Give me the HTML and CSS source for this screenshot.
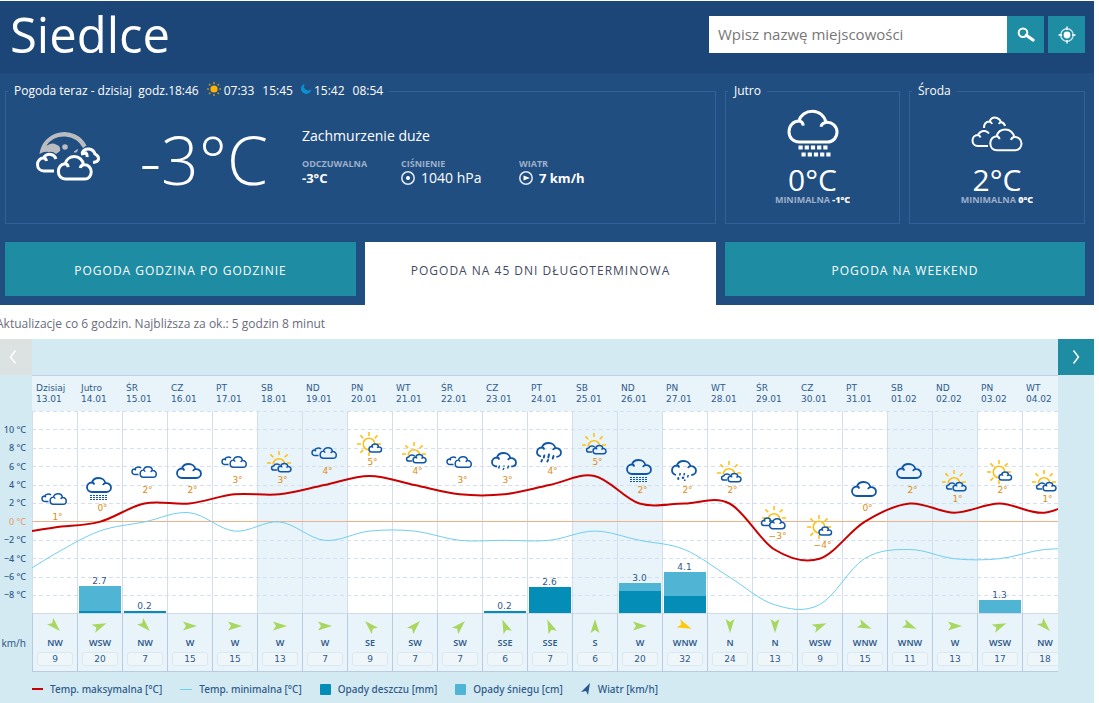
FILE: index.html
```html
<!DOCTYPE html>
<html lang="pl">
<head>
<meta charset="utf-8">
<title>Pogoda Siedlce</title>
<link rel="stylesheet" href="styles.css">
</head>
<body>
<svg class="defs" aria-hidden="true">
  <defs>
    <g id="cloud">
      <path class="cloud-body" d="M6 15C3 15 1 13 1 10.3C1 7.6 3.1 5.6 5.9 5.5C6.7 2.8 9.4 1 12.7 1C16.1 1 18.9 3.2 19.4 6.1C22.7 5.8 25 8 25 10.5C25 13 23 15 20.3 15Z"/>
      <path class="cloud-hook" d="M5.9 5.5C7.2 5.6 8 6.3 8.1 7.6M19.4 6.1C18 6.3 17.2 7 17 8.1"/>
    </g>
    <g id="i-clouds">
      <path class="cloud-open" d="M7.5 16.500H4C2.200 16.500 1 15.300 1 13.700C1 12.200 2.200 11.200 3.600 11.100C4.300 9.700 5.700 9 7.300 9C8.400 9 9.300 9.300 10 10M3.600 11.100L5 12"/>
      <use href="#cloud" transform="translate(8.5 8) scale(.67 .75)"/>
    </g>
    <g id="i-cloud" class="bold"><use href="#cloud" transform="translate(0 5)"/></g>
    <g id="i-snow" class="bold">
      <use href="#cloud" transform="translate(0 1)"/>
      <path class="dots" stroke-dasharray="2 1" d="M4 19.5H22M4 21.5H22M4 23.5H22"/>
    </g>
    <g id="i-drizzle" class="bold">
      <path class="cloud-open" d="M6 18.5C3 18.5 1 17 1 14.3C1 11.6 3.1 9.6 5.9 9.5C6.7 6.8 9.4 5 12.7 5C16.1 5 18.9 7.2 19.4 10.1C22.7 9.8 25 12 25 14.5C25 17 23 18.5 20.3 18.5M5.9 9.5C7.2 9.6 8 10.3 8.1 11.6M19.4 10.1C18 10.3 17.2 11 17 12.1"/>
      <path class="drop" d="M8.6 17.5L7.6 20.5M13 17.5V18.6M13 20L12 22M17.6 17.5L16.6 20.5"/>
    </g>
    <g id="i-rain" class="bold">
      <path class="cloud-open" d="M5 17.5C3 17 1 16 1 13.3C1 10.6 3.1 8.6 5.9 8.5C6.7 5.8 9.4 4 12.7 4C16.1 4 18.9 6.2 19.4 9.1C22.7 8.8 25 11 25 13.5C25 16 23 17.8 20.3 17.8M5.9 8.5C7.2 8.6 8 9.3 8.1 10.6M19.4 9.1C18 9.3 17.2 10 17 11.1"/>
      <path class="drop wide" d="M8.3 16.5L7.8 18.5M13 15.5L12.3 18.5M17.5 17L16.8 19.5M6 21L5.4 22.5M12 21L11.4 22.5"/>
    </g>
    <g id="i-sleet" class="bold">
      <path class="cloud-open" d="M5 17C3 16.5 1 15 1 12.3C1 9.6 3.1 7.6 5.9 7.5C6.7 4.8 9.4 3 12.7 3C16.1 3 18.9 5.2 19.4 8.1C22.7 7.8 25 10 25 12.5C25 15 23 17 20.3 17M5.9 7.5C7.2 7.6 8 8.3 8.1 9.6M19.4 8.1C18 8.3 17.2 9 17 10.1"/>
      <path class="drop" d="M9.3 15L8.6 17.5M13.5 15L13 17.3M17.3 17L16.5 19.5M6.5 19.5L8 21.5M8 19.5L6.5 21.5M12 18.5V21M10.8 19.8H13.2M14 21.5L13.5 23"/>
    </g>
    <g id="sun">
      <circle class="sun-disc" r="5.8"/>
      <path class="ray" d="M0 -8V-12M0 8V12M-8 0H-12M8 0H12M-5.7 -5.7L-8.6 -8.6M5.7 -5.7L8.6 -8.6M-5.7 5.7L-8.6 8.6"/>
    </g>
    <g id="i-sun-cloud">
      <use href="#sun" transform="translate(13 14)"/>
      <use href="#cloud" transform="translate(12.5 13.5) scale(.52 .56)"/>
    </g>
    <g id="half-sun">
      <path class="sun-disc" d="M-5.8 1.5A5.8 5.8 0 1 1 5.8 1.5"/>
      <path class="ray" d="M0 -8V-12M-8 0H-12M8 0H12M-5.7 -5.7L-8.6 -8.6M5.7 -5.7L8.6 -8.6"/>
    </g>
    <g id="i-sun-clouds">
      <use href="#half-sun" transform="translate(13 15)"/>
      <path class="cloud-open" d="M11 22H8C6.500 22 5.600 21.200 5.600 19.900C5.600 18.700 6.500 17.900 7.800 17.900C8.400 16.600 9.700 16 11 16C12.300 16 13.300 16.500 13.800 17.400"/>
      <use href="#cloud" transform="translate(11.5 15) scale(.54 .58)"/>
    </g>
    <g id="i-sun-big-clouds">
      <use href="#half-sun" transform="translate(13 14)"/>
      <use href="#cloud" transform="translate(0 13.5) scale(.5 .54)"/>
      <use href="#cloud" transform="translate(8 14) scale(.64 .72)"/>
    </g>
    <path id="wind-arrow" d="M-7 -4.5L7 0L-7 4.5L-4 0Z"/>
  </defs>
</svg>

<header class="top">
  <h1>Siedlce</h1>
  <form class="search">
    <input type="text" aria-label="Miejscowość" placeholder="Wpisz nazwę miejscowości">
    <button type="button" aria-label="Szukaj">
      <svg width="18" height="16" viewBox="0 0 18 16"><circle cx="6" cy="5.7" r="4.3" fill="none" stroke="#fff" stroke-width="2"/><path d="M9.3 8.3L16 13" stroke="#fff" stroke-width="3.2" stroke-linecap="round"/></svg>
    </button>
    <button type="button" class="locate" aria-label="Lokalizuj">
      <svg width="18" height="18" viewBox="0 0 18 18"><circle cx="9" cy="9" r="6.2" fill="none" stroke="#fff" stroke-opacity=".75" stroke-width="1.4"/><circle cx="9" cy="9" r="3.4" fill="#fff"/><path d="M9 .5V4M9 14V17.500M.5 9H4M14 9H17.500" stroke="#fff" stroke-width="1.4"/></svg>
    </button>
  </form>
</header>

<main>
<section class="now">
  <div class="cards">
    <fieldset class="card current">
      <legend>
        <span>Pogoda teraz - dzisiaj&nbsp; godz.18:46</span>
        <svg class="sun-mark" width="14" height="14" viewBox="0 0 14 14"><circle cx="7" cy="7" r="3.600" fill="#fdb300"/><path d="M7 0V2M7 12V14M0 7H2M12 7H14M2 2L3.400 3.400M10.600 10.600L12 12M12 2L10.600 3.400M3.400 10.600L2 12" stroke="#b98f25" stroke-width="1.500"/></svg>
        <span class="time">07:33</span><span class="time late">15:45</span>
        <svg class="moon-mark" width="10" height="10" viewBox="0 0 10 10"><path d="M3 .4A4.800 4.800 0 1 0 9.800 6.200A4.600 4.600 0 0 1 3 .4Z" fill="#0b93d3" stroke="#0b93d3"/></svg>
        <span class="time">15:42</span><span class="time late">08:54</span>
      </legend>
      <div class="current-row">
        <svg class="white-icon" width="64" height="50" viewBox="0 0 64 50">
          <path d="M3.500 23A25 25 0 0 1 50.500 14.500L47 17A22 22 0 0 0 29 5.500Q17 5 10.500 14.500Q12 14.500 13 13.500Q17 11.500 20 13.500Q25 15 24 20L20 23Q17 20 13 21Q8 20 3.500 23Z" fill="#b9bcc0"/>
          <circle cx="29" cy="16" r="2.800" fill="#b9bcc0"/><path d="M38 21L41.500 18.500L40.500 21Z" fill="#b9bcc0" stroke="#b9bcc0"/>
          <path class="thick-line" d="M18 40H8C4 40 1.500 37 1.500 33.500C1.500 30 4 27 7.500 27C9 24 12 22.500 15 23.500Q18.500 24 20 28M7.500 27Q10 27 10.500 30M45 23L50 22Q51.500 24 51 26M46 22Q48 17.500 53 18Q57.500 18.500 59 23Q63 25 62.500 28.500Q61.500 31 57 31.500"/>
          <use class="thick" href="#cloud" transform="translate(21 24) scale(1.370 1.600)"/>
        </svg>
        <div class="big-temp">-3°C</div>
        <div class="details">
          <p class="summary">Zachmurzenie duże</p>
          <dl class="stats">
            <div><dt>ODCZUWALNA</dt><dd><b>-3°C</b></dd></div>
            <div><dt>CIŚNIENIE</dt><dd><svg width="14" height="14" viewBox="0 0 14 14"><circle cx="7" cy="7" r="6.200" fill="none" stroke="#e4ebf3" stroke-width="1.500"/><circle cx="7" cy="7" r="2" fill="#fff"/></svg><span class="pressure">1040 hPa</span></dd></div>
            <div><dt>WIATR</dt><dd><svg width="14" height="14" viewBox="0 0 14 14"><circle cx="7" cy="7" r="6.200" fill="none" stroke="#e4ebf3" stroke-width="1.500"/><path d="M4.500 4.500L11 7L4.500 9.500Z" fill="#fff"/></svg><b>7 km/h</b></dd></div>
          </dl>
        </div>
      </div>
    </fieldset>
    <fieldset class="card day">
      <legend>Jutro</legend>
      <div class="day-body">
        <svg class="white-icon" width="52" height="50" viewBox="0 0 52 50">
          <use class="thick" href="#cloud" transform="translate(0 0) scale(2 2.200)"/>
          <path d="M11.500 38.500H41M14.500 45.500H44" stroke="#fff" stroke-width="4" stroke-dasharray="4.200 2"/>
        </svg>
        <div class="day-temp">0°C</div>
        <p class="min">MINIMALNA <b>-1°C</b></p>
      </div>
    </fieldset>
    <fieldset class="card day">
      <legend>Środa</legend>
      <div class="day-body">
        <svg class="white-icon" width="52" height="50" viewBox="0 0 52 50">
          <path class="mid-line" d="M13 19C13 15 15 12.500 18.500 12.500C20 9.500 23 8 26 9Q29 10 30 13Q33.500 14 34 17M18.500 12.500Q20.500 13 21 15M30 13Q28.500 13.500 28 15M17 37H7C3.500 37 1.500 34.500 1.500 31.500C1.500 28.500 3.500 26 7 26C8.500 23 11 21.500 14 22Q16.500 22.500 18 24.500M7 26Q9 26.500 9.500 28.500"/>
          <use class="mid" href="#cloud" transform="translate(18 19) scale(1.300 1.480)"/>
        </svg>
        <div class="day-temp">2°C</div>
        <p class="min">MINIMALNA <b>0°C</b></p>
      </div>
    </fieldset>
  </div>
  <nav class="tabs">
    <a href="#godzina">POGODA GODZINA PO GODZINIE</a>
    <a href="#dlugoterminowa" class="active">POGODA NA 45 DNI DŁUGOTERMINOWA</a>
    <a href="#weekend">POGODA NA WEEKEND</a>
  </nav>
</section>

<p class="update">Aktualizacje co 6 godzin. Najbliższa za ok.: 5 godzin 8 minut</p>

<section class="forecast">
  <div class="left-col">
    <button type="button" class="step prev" aria-label="Wcześniej" disabled><svg width="8" height="16" viewBox="0 0 8 16"><path d="M6.500 1.500L1.500 8L6.500 14.500"/></svg></button>
    <ul class="axis" id="axis"></ul>
    <span class="unit">km/h</span>
  </div>
  <div class="chart-window">
    <table class="chart">
      <thead><tr id="days"></tr></thead>
      <tbody>
        <tr><td class="plot-cell" colspan="23"><svg id="plot" class="plot" width="1035" height="202" role="img" aria-label="Prognoza temperatury i opadów"></svg></td></tr>
        <tr id="wind"></tr>
      </tbody>
    </table>
  </div>
  <div class="right-col">
    <button type="button" class="step next" aria-label="Później"><svg width="8" height="16" viewBox="0 0 8 16"><path d="M1.500 1.500L6.500 8L1.500 14.500"/></svg></button>
  </div>
  <ul class="legend">
    <li><i class="key-max"></i>Temp. maksymalna [°C]</li>
    <li><i class="key-min"></i>Temp. minimalna [°C]</li>
    <li><i class="key-box rain"></i>Opady deszczu [mm]</li>
    <li><i class="key-box snow"></i>Opady śniegu [cm]</li>
    <li><svg width="10" height="12" viewBox="0 0 10 12"><path d="M9 0L7 12L5 8L0 9Z" fill="#2b588c"/></svg>Wiatr [km/h]</li>
  </ul>
</section>
</main>
<script src="chart.js"></script>
</body>
</html>
```
FILE: styles.css
```css
* { box-sizing: border-box; }
body {
  margin: 1px 5px 0 0;
  background: #fff;
  font-family: "Open Sans", "Noto Sans", sans-serif;
  font-size: 12px;
  color: #fff;
  overflow-x: hidden;
}
h1, p, ul, dl, dd { margin: 0; padding: 0; }
ul { list-style: none; }
button { border: 0; padding: 0; display: flex; align-items: center; justify-content: center; }
svg { flex: none; }
.defs { position: absolute; width: 0; height: 0; }

/* icons */
.cloud-body { fill: var(--bg, #fff); }
.cloud-hook, .cloud-open { fill: none; }
.cloud-body, .cloud-hook, .cloud-open { stroke: var(--line, #0f55a8); stroke-width: var(--weight, 1.5px); vector-effect: non-scaling-stroke; stroke-linejoin: round; }
.bold { --weight: 1.8px; }
.dots { stroke: #0f55a8; stroke-width: 1px; fill: none; }
.drop { stroke: #0f55a8; stroke-width: 1.5px; fill: none; }
.drop.wide { stroke-width: 2px; stroke-linecap: round; }
.sun-disc { fill: none; stroke: #ffbe0d; stroke-width: 1.5px; }
.ray { fill: none; stroke: #ffbe0d; stroke-width: 1.5px; }
.white-icon { --bg: #214e81; --line: #fff; }
.thick { --weight: 3px; }
.mid { --weight: 2px; }
.thick-line, .mid-line { fill: none; stroke: #fff; stroke-width: 3px; }
.mid-line { stroke-width: 2px; }

/* header */
.top { display: flex; justify-content: space-between; height: 72px; padding: 0 9px 0 10px; background: #1c4677; }
h1 { font-size: 49px; line-height: 66px; font-weight: 400; }
.search { display: flex; padding-top: 15px; }
.search input { width: 298px; height: 37px; border: 0; border-radius: 0; padding: 0 9px 2px; font: 15px "Open Sans", sans-serif; color: #777; }
.search input::placeholder { color: #777; opacity: 1; }
.search button { width: 37px; height: 37px; background: #1e8ca3; }
.search .locate { margin-left: 4px; }

/* current weather */
.now { background: #214e81; padding: 9px 9px 0 5px; }
.cards { display: grid; grid-template-columns: 711fr 175fr 176fr; gap: 9px; }
.card { min-width: 0; height: 142px; margin: 0; padding: 0; border: 1px solid #35609a; }
.card legend { display: flex; align-items: center; margin-left: 2px; padding: 0 6px; line-height: 18px; }
.time { margin-left: 3px; }
.late { margin-left: 8px; }
.sun-mark { margin: 0 0 4px 8px; }
.moon-mark { margin: 0 0 4px 8px; }
.current-row { display: grid; grid-template-columns: 64px 202px 1fr; padding: 27px 0 0 30px; }
.current-row > .white-icon { margin-top: 4px; }
.big-temp { padding-right: 34px; text-align: right; font-size: 66px; line-height: 64px; font-weight: 300; white-space: nowrap; }
.summary { font-size: 14px; line-height: 18px; font-weight: 500; }
.stats { display: flex; margin-top: 13px; }
.stats div:nth-child(1) { width: 99px; }
.stats div:nth-child(2) { width: 118px; }
dt { font-size: 9px; line-height: 12px; font-weight: 700; color: #9dafc9; }
dd { display: flex; align-items: center; gap: 6px; font-size: 13px; line-height: 16px; }
.pressure { font-size: 14px; }
.day legend { padding-left: 6px; }
.day-body { display: flex; flex-direction: column; align-items: center; padding-top: 9px; }
.day-temp { margin-top: 6px; font-size: 30px; line-height: 30px; }
.min { font-size: 9px; line-height: 10px; font-weight: 700; color: #9dafc9; }
.min b { color: #fff; }

/* tabs */
.tabs { display: grid; grid-template-columns: 351fr 351fr 360fr; gap: 9px; margin-top: 18px; }
.tabs a { margin-bottom: 9px; background: #1e8ca3; color: #fff; font-size: 12px; line-height: 50px; font-weight: 500; letter-spacing: 1px; text-align: center; text-decoration: none; padding-top: 4px; height: 54px; }
.tabs .active { margin-bottom: 0; height: 63px; background: #fff; color: #444b60; font-weight: 400; }
.update { margin-left: -4px; padding: 10px 0 6px; line-height: 18px; color: #6b6c7c; }

/* forecast */
.forecast { display: grid; grid-template-columns: 32px 1fr 36px; background: #d4eaf2; color: #2f5a8c; font-family: "DejaVu Sans", sans-serif; font-size: 9px; }
.step { height: 36px; width: 100%; }
.step path { fill: none; stroke: #fff; stroke-width: 1.5px; }
.prev { background: #dce2e1; padding-right: 6px; }
.next { background: #1e8ca3; }
.left-col { font-family: "Noto Sans", sans-serif; }
.axis { display: flex; flex-direction: column; height: 184px; margin-top: 45px; padding-right: 6px; font-weight: 500; }
.axis li { flex: 1; display: flex; align-items: center; justify-content: flex-end; white-space: nowrap; }
.axis .zero { color: #e8a070; }
.unit { display: block; margin-top: 32px; padding-right: 6px; text-align: right; font-size: 10px; line-height: 14px; }
.chart-window { overflow: hidden; min-width: 0; padding-top: 36px; }
.chart { width: 1035px; table-layout: fixed; border-collapse: separate; border-spacing: 0; }
.chart th { height: 36px; border-top: 1px solid #bfd0e5; background: #e8f4f9; padding: 0 0 0 4px; text-align: left; font-weight: 400; line-height: 11px; }
.chart td { padding: 0; }
.plot { display: block; width: 1035px; height: 202px; }
.wind-cell { height: 59px; border-top: 1px solid #cfdbe9; border-left: 1px solid #b9cbe0; border-bottom: 1px solid #b9cbe0; background: #e8f4f9; text-align: center; vertical-align: top; }
.wind-cell svg { display: block; margin: 4px auto 0; }
.wind-cell svg use { fill: #a8d760; }
.wind-cell .strong use { fill: #ffc80a; }
.wind-name { display: block; line-height: 14px; margin-top: 2px; font-family: "Noto Sans", sans-serif; font-weight: 600; }
.wind-speed { display: block; margin: 2px 4px 0; border: 1px solid #dce8f0; border-radius: 3px; background: #eef6fa; line-height: 12px; }
.col { fill: #fff; }
.col.weekend { fill: #e8f4f9; }
.weekend-icon { --bg: #e8f4f9; }
.v-line { stroke: #d3deed; stroke-width: 1px; }
.h-line { stroke: #d3e0f0; stroke-width: 1px; stroke-dasharray: 4 3; }
.zero-line { stroke: #f0b088; stroke-width: 1px; }
.line-max { fill: none; stroke: #c80000; stroke-width: 2px; }
.line-min { fill: none; stroke: #6fcfee; stroke-width: 1px; }
.rain { fill: #048db6; background: #048db6; }
.snow { fill: #50b4d4; background: #50b4d4; }
.temp-label { fill: #de8a12; text-anchor: middle; }
.bar-label { fill: #2f5a8c; text-anchor: middle; }
.legend { grid-column: 1 / -1; display: flex; gap: 18px; padding: 9px 32px 6px; font-family: "Noto Sans", sans-serif; font-size: 10px; font-weight: 500; line-height: 16px; white-space: nowrap; }
.legend li { display: flex; align-items: center; gap: 7px; }
.key-max { width: 11px; height: 2px; background: #c80000; }
.key-min { width: 12px; height: 1px; background: #6fcfee; }
.key-box { width: 11px; height: 11px; border-radius: 1px; }
```
FILE: chart.js
```javascript
const STEP = 45;
const DEG = 9.2;
const TOP = 12;
const HEIGHT = 202;

// day, date, max, min, icon, label, wind, speed, rain, snow
const data = [
  ['Dzisiaj', '13.01', -1, -3.5, 'clouds', '1°', 'NW', 9, 0, 0],
  ['Jutro', '14.01', 0, -1, 'snow', '0°', 'WSW', 20, 0.2, 2.5],
  ['ŚR', '15.01', 2, 0, 'clouds', '2°', 'NW', 7, 0.2, 0],
  ['CZ', '16.01', 2, 1, 'cloud', '2°', 'W', 15, 0, 0],
  ['PT', '17.01', 3, -1, 'clouds', '3°', 'W', 15, 0, 0],
  ['SB', '18.01', 3, 0, 'sun-clouds', '3°', 'W', 13, 0, 0],
  ['ND', '19.01', 4, -2, 'clouds', '4°', 'W', 7, 0, 0],
  ['PN', '20.01', 5, -1, 'sun-cloud', '5°', 'SE', 9, 0, 0],
  ['WT', '21.01', 4, -1, 'sun-clouds', '4°', 'SW', 7, 0, 0],
  ['ŚR', '22.01', 3, -2, 'clouds', '3°', 'SW', 7, 0, 0],
  ['CZ', '23.01', 3, -2, 'drizzle', '3°', 'SSE', 6, 0.2, 0],
  ['PT', '24.01', 4, -2, 'rain', '4°', 'SSE', 7, 2.6, 0],
  ['SB', '25.01', 5, -1, 'sun-clouds', '5°', 'S', 6, 0, 0],
  ['ND', '26.01', 2, -2, 'snow', '2°', 'W', 20, 2.2, 0.8],
  ['PN', '27.01', 2, -3, 'sleet', '2°', 'WNW', 32, 1.7, 2.4],
  ['WT', '28.01', 2, -6, 'sun-clouds', '2°', 'N', 24, 0, 0],
  ['ŚR', '29.01', -3, -9, 'sun-big-clouds', '−3°', 'N', 13, 0, 0],
  ['CZ', '30.01', -4, -9, 'sun-cloud', '−4°', 'WSW', 9, 0, 0],
  ['PT', '31.01', 0, -4, 'cloud', '0°', 'WNW', 15, 0, 0],
  ['SB', '01.02', 2, -3, 'cloud', '2°', 'WNW', 11, 0, 0],
  ['ND', '02.02', 1, -4, 'sun-clouds', '1°', 'W', 13, 0, 0],
  ['PN', '03.02', 2, -4, 'sun-cloud', '2°', 'WSW', 17, 0, 1.3],
  ['WT', '04.02', 1, -3, 'sun-clouds', '1°', 'NW', 18, 0, 0]
];
const angles = { W: 0, WSW: -22.5, SW: -45, S: -90, SSE: -112.5, SE: -135, NW: 45, WNW: 22.5, N: 90 };

const yOf = t => (TOP - t) * DEG + 0.5;
const xOf = i => i * STEP + STEP / 2;

function spline(points) {
  const k = 0.34;
  const slope = i => {
    const a = points[Math.max(i - 1, 0)];
    const b = points[Math.min(i + 1, points.length - 1)];
    return (b[1] - a[1]) / (b[0] - a[0]);
  };
  let d = `M${points[0]}`;
  for (let i = 0; i < points.length - 1; i++) {
    const [x0, y0] = points[i];
    const [x1, y1] = points[i + 1];
    const w = (x1 - x0) * k;
    d += `C${x0 + w} ${y0 + slope(i) * w} ${x1 - w} ${y1 - slope(i + 1) * w} ${x1} ${y1}`;
  }
  return d;
}

const isWeekend = d => d[0] === 'SB' || d[0] === 'ND';
let svg = '';
data.forEach((d, i) => {
  svg += `<rect class="col${isWeekend(d) ? ' weekend' : ''}" x="${i * STEP}" y="0" width="${STEP}" height="${HEIGHT}"/>`;
});
for (let t = 12; t >= -8; t -= 2) {
  if (t !== 0) svg += `<path class="h-line" d="M0 ${Math.round(yOf(t) - 0.5) + 0.5}H1035"/>`;
}
data.forEach((d, i) => { svg += `<path class="v-line" d="M${i * STEP + 0.5} 0V${HEIGHT}"/>`; });
svg += `<path class="zero-line" d="M0 110.5H1035"/>`;

data.forEach((d, i) => {
  const rain = d[8] * 10, snow = d[9] * 10;
  if (!rain && !snow) return;
  const x = i * STEP + 2;
  svg += `<rect class="snow" x="${x}" y="${HEIGHT - rain - snow}" width="42" height="${snow}"/>`;
  svg += `<rect class="rain" x="${x}" y="${HEIGHT - rain}" width="42" height="${rain}"/>`;
  svg += `<text class="bar-label" x="${xOf(i)}" y="${HEIGHT - rain - snow - 2}">${(d[8] + d[9]).toFixed(1)}</text>`;
});

const maxPoints = data.map((d, i) => [xOf(i), yOf(i ? d[2] : -0.6)]);
const minPoints = data.map((d, i) => [xOf(i), yOf(d[3])]);
maxPoints.unshift([0, yOf(-1)]);
minPoints.unshift([0, yOf(-5)]);
maxPoints.push([1057, yOf(3)]);
minPoints.push([1057, yOf(-3)]);
svg += `<path class="line-min" d="${spline(minPoints)}"/>`;
data.forEach((d, i) => {
  const y = Math.round(yOf(d[2]));
  svg += `<use class="${isWeekend(d) ? 'weekend-icon' : ''}" href="#i-${d[4]}" x="${i * STEP + 9}" y="${y - 46}"/>`;
  svg += `<text class="temp-label" x="${xOf(i) + 3}" y="${y - 11}">${d[5]}</text>`;
});
svg += `<path class="line-max" d="${spline(maxPoints)}"/>`;
document.getElementById('plot').innerHTML = svg;

document.getElementById('days').innerHTML = data.map(d => `<th scope="col">${d[0]}<br>${d[1]}</th>`).join('');
document.getElementById('wind').innerHTML = data.map(d =>
  `<td class="wind-cell"><svg class="${d[7] > 30 ? 'strong' : ''}" width="16" height="16" viewBox="-8 -8 16 16"><use href="#wind-arrow" transform="rotate(${angles[d[6]]})"/></svg><span class="wind-name">${d[6]}</span><span class="wind-speed">${d[7]}</span></td>`).join('');
document.getElementById('axis').innerHTML = [10, 8, 6, 4, 2, 0, -2, -4, -6, -8].map(t =>
  `<li class="${t === 0 ? 'zero' : ''}">${String(t).replace('-', '−')} °C</li>`).join('');
```
